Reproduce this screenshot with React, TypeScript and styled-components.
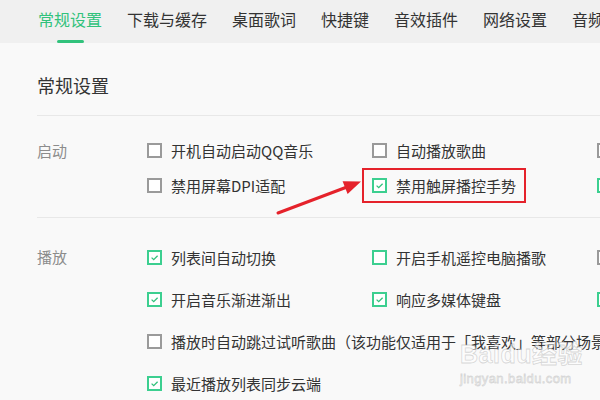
import React from "react";
import styled, { createGlobalStyle, css } from "styled-components";

const GREEN = "#31c27c";

const Global = createGlobalStyle`
  html, body { margin: 0; padding: 0; background: #f9f9f9; }
  body { font-family: "Noto Sans CJK SC", "Noto Sans", sans-serif; }
  * { box-sizing: border-box; }
`;

const Page = styled.div`
  position: relative;
  width: 600px;
  height: 400px;
  overflow: hidden;
  background: #f9f9f9;
`;

const TabBar = styled.div`
  display: flex;
  gap: 25px;
  height: 43px;
  padding-left: 38px;
  background: #f0f0f0;
  white-space: nowrap;
`;

const Tab = styled.div<{ $active?: boolean }>`
  position: relative;
  flex: none;
  height: 43px;
  line-height: 39px;
  font-size: 16px;
  color: ${(p) => (p.$active ? GREEN : "#333")};
  ${(p) =>
    p.$active &&
    css`
      &::after {
        content: "";
        position: absolute;
        left: 50%;
        bottom: 0;
        width: 27px;
        height: 3px;
        margin-left: -13px;
        border-radius: 2px;
        background: ${GREEN};
      }
    `}
`;

const Content = styled.div`
  padding: 30px 0 0 37px;
`;

const Heading = styled.h2`
  margin: 0 0 18px;
  font-size: 18px;
  line-height: 24px;
  font-weight: 400;
  color: #333;
`;

const Divider = styled.div`
  height: 1px;
  background: #e8e8e8;
`;

const Section = styled.div<{ $rowH: number; $pad: string }>`
  display: grid;
  grid-template-columns: 110px 225px 225px 225px;
  grid-auto-rows: ${(p) => p.$rowH}px;
  padding: ${(p) => p.$pad};
`;

const Label = styled.div<{ $rowH: number; $rows: number }>`
  grid-column: 1;
  grid-row: 1 / span ${(p) => p.$rows};
  line-height: ${(p) => p.$rowH}px;
  font-size: 15px;
  color: #8c8c8c;
`;

const Item = styled.div<{ $wide?: boolean; $mark?: boolean }>`
  position: relative;
  display: flex;
  align-items: center;
  gap: 9px;
  justify-self: start;
  font-size: 15px;
  color: #333;
  white-space: nowrap;
  ${(p) => p.$wide && css`grid-column: 2 / -1;`}
  ${(p) =>
    p.$mark &&
    css`
      &::after {
        content: "";
        position: absolute;
        top: 0;
        bottom: 0;
        left: -10px;
        right: -10px;
        border: 2px solid #e5222b;
      }
    `}
`;

const Box = styled.span<{ $green?: boolean }>`
  flex: none;
  display: flex;
  align-items: center;
  justify-content: center;
  width: 15px;
  height: 15px;
  border: 2px solid ${(p) => (p.$green ? "#3ccf90" : "#9a9a9a")};
  background: #fff;
`;

const Watermark = styled.div`
  position: absolute;
  left: 460px;
  top: 342px;
  color: rgba(255, 255, 255, 0.55);
  -webkit-text-stroke: 0.8px rgba(170, 170, 170, 0.45);
  font-family: "Liberation Sans", "Noto Sans CJK SC", sans-serif;
  line-height: 1;
  pointer-events: none;
`;

const WmBig = styled.div`
  font-size: 25px;
  font-weight: 700;
  letter-spacing: 0.5px;
`;

const WmSmall = styled.div`
  margin-top: 5px;
  font-size: 13px;
  letter-spacing: 0.4px;
`;

const Arrow = styled.svg`
  position: absolute;
  left: 0;
  top: 0;
  pointer-events: none;
`;

type Opt = { text: string; checked?: boolean; green?: boolean; wide?: boolean; mark?: boolean };

function Check({ checked, green }: { checked?: boolean; green?: boolean }) {
  return (
    <Box $green={green || checked}>
      {checked && (
        <svg width="11" height="11" viewBox="0 0 11 11">
          <path d="M2.6 5.6 L4.7 7.6 L8.6 3.7" fill="none" stroke={GREEN} strokeWidth="1.3" />
        </svg>
      )}
    </Box>
  );
}

function Option({ o }: { o: Opt }) {
  return (
    <Item $wide={o.wide} $mark={o.mark}>
      <Check checked={o.checked} green={o.green} />
      <span>{o.text}</span>
    </Item>
  );
}

const tabs = ["常规设置", "下载与缓存", "桌面歌词", "快捷键", "音效插件", "网络设置", "音频设备"];

const startup: Opt[] = [
  { text: "开机自动启动QQ音乐" },
  { text: "自动播放歌曲" },
  { text: "自动打开主界面" },
  { text: "禁用屏幕DPI适配" },
  { text: "禁用触屏播控手势", checked: true, mark: true },
  { text: "开启硬件加速", checked: true },
];

const playback: Opt[] = [
  { text: "列表间自动切换", checked: true },
  { text: "开启手机遥控电脑播歌", green: true },
  { text: "程序启动时自动播放" },
  { text: "开启音乐渐进渐出", checked: true },
  { text: "响应多媒体键盘", checked: true },
  { text: "显示歌曲通知", checked: true },
  { text: "播放时自动跳过试听歌曲（该功能仅适用于「我喜欢」等部分场景）", wide: true },
  { text: "最近播放列表同步云端", checked: true },
];

export default function App() {
  return (
    <Page>
      <Global />
      <TabBar>
        {tabs.map((t, i) => (
          <Tab key={t} $active={i === 0}>
            {t}
          </Tab>
        ))}
      </TabBar>
      <Content>
        <Heading>常规设置</Heading>
        <Divider />
        <Section $rowH={35} $pad="17px 0 14px">
          <Label $rowH={35} $rows={2}>启动</Label>
          {startup.map((o) => (
            <Option key={o.text} o={o} />
          ))}
        </Section>
        <Divider />
        <Section $rowH={42} $pad="18px 0 0">
          <Label $rowH={42} $rows={4}>播放</Label>
          {playback.map((o) => (
            <Option key={o.text} o={o} />
          ))}
        </Section>
      </Content>
      <Watermark>
        <WmBig>Baidu经验</WmBig>
        <WmSmall>jingyan.baidu.com</WmSmall>
      </Watermark>
      <Arrow width="600" height="400" viewBox="0 0 600 400">
        <line x1="278" y1="213" x2="347" y2="187" stroke="#e5222b" strokeWidth="3" strokeLinecap="round" />
        <polygon points="361,181.5 347.6,194 342.6,181.3" fill="#e5222b" />
      </Arrow>
    </Page>
  );
}
